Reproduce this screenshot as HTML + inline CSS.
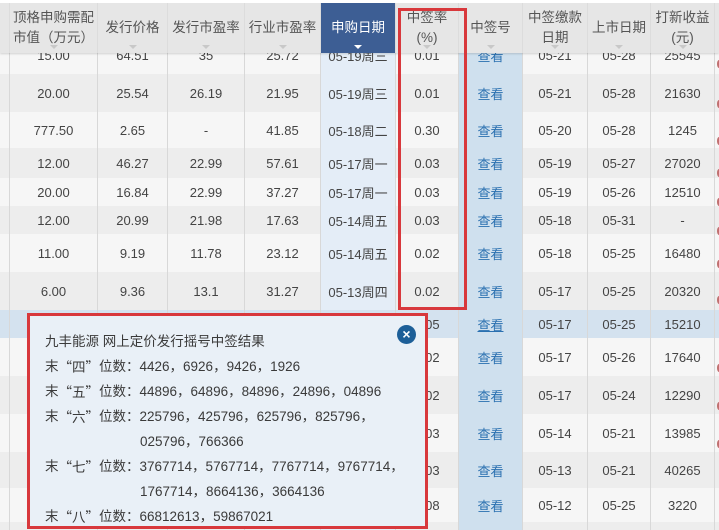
<!DOCTYPE html>
<html><head><meta charset="utf-8"><style>
*{margin:0;padding:0;box-sizing:border-box}
html,body{width:719px;height:530px;overflow:hidden}
body{background:#f4f4f4;font-family:"Liberation Sans","Noto Sans CJK SC",sans-serif;font-size:13px;color:#444;position:relative}
.row{position:absolute;left:0;width:719px;display:flex}
.row div{height:100%;display:flex;align-items:center;justify-content:center;border-right:1px solid #d8d8d8;white-space:nowrap}
.c0{width:10px}.c1{width:88px}.c2{width:70px}.c3{width:77px}.c4{width:76px}.c5{width:75px;background:#e4edf7}.c6{width:63px}.c7{width:64px;background:#cfe0ee;color:#2a70b0}.c8{width:65px}.c9{width:63px}.c10{width:64px}.c11{width:4px;border:none!important}
.a{background:#f6f6f6}.b{background:#ededed}
.hl{background:#d4e2ef}
.hdr{position:absolute;left:0;top:0;width:719px;height:53px;background:#e6e6e6;border-top:3px solid #fff;display:flex;z-index:2;box-shadow:0 1px 2px rgba(0,0,0,.15)}
.hdr div{height:100%;display:flex;flex-direction:column;align-items:center;justify-content:center;text-align:center;color:#555;font-size:13.5px;line-height:20px;position:relative;border-right:1px solid #dcdcdc}
.hdr div::after{content:"";position:absolute;bottom:4px;left:50%;margin-left:-4px;border:4px solid transparent;border-top:4px solid #c8c8c8;border-bottom:none}
.hdr .c0::after,.hdr .c11::after{display:none}
.hdr .act{background:#3d5e94;color:#fff}
.hdr .act::after{border-top-color:#fff}
.hdr .c5,.hdr .c7{background:#e6e6e6;color:#555}
.hdr .c5.act{background:#3d5e94;color:#fff}
.red{position:absolute;left:398px;top:8px;width:69px;height:302px;border:3px solid #d8383c;z-index:3}
.pop{position:absolute;left:27px;top:313px;width:401px;height:216px;border:3px solid #d8383c;background:#e9f0f7;z-index:4;padding:13px 0 0 15px;color:#3a3a3a;font-size:13.5px;line-height:25px}
.pop p{white-space:nowrap;height:25px;overflow:visible}
.pop .in{padding-left:95px}
.q{font-family:"Noto Sans CJK SC",sans-serif;line-height:1;display:inline-block;height:14px;vertical-align:-1px}
.x{position:absolute;left:367px;top:9px;width:19px;height:19px;border-radius:50%;background:#1d5f98;color:#fff;font-size:14px;line-height:18px;text-align:center;font-weight:bold}
.dot{position:absolute;left:717px;width:4px;height:8px;border-radius:50%;background:#c07070;z-index:1}
</style></head><body>

<div class="hdr">
<div class="c0"></div>
<div class="c1" style="align-items:flex-start;padding-left:3px">顶格申购需配<br>市值（万元）</div>
<div class="c2">发行价格</div>
<div class="c3">发行市盈率</div>
<div class="c4">行业市盈率</div>
<div class="c5 act">申购日期</div>
<div class="c6">中签率<br>(%)</div>
<div class="c7">中签号</div>
<div class="c8">中签缴款<br>日期</div>
<div class="c9">上市日期</div>
<div class="c10">打新收益<br>(元)</div>
<div class="c11" style="border:none"></div>
</div>

<div class="row a" style="top:36px;height:38px"><div class="c0"></div><div class="c1">15.00</div><div class="c2">64.51</div><div class="c3">35</div><div class="c4">25.72</div><div class="c5">05-19周三</div><div class="c6">0.01</div><div class="c7">查看</div><div class="c8">05-21</div><div class="c9">05-28</div><div class="c10">25545</div><div class="c11"></div></div>
<div class="row b" style="top:74px;height:38px"><div class="c0"></div><div class="c1">20.00</div><div class="c2">25.54</div><div class="c3">26.19</div><div class="c4">21.95</div><div class="c5">05-19周三</div><div class="c6">0.01</div><div class="c7">查看</div><div class="c8">05-21</div><div class="c9">05-28</div><div class="c10">21630</div><div class="c11"></div></div>
<div class="row a" style="top:112px;height:36px"><div class="c0"></div><div class="c1">777.50</div><div class="c2">2.65</div><div class="c3">-</div><div class="c4">41.85</div><div class="c5">05-18周二</div><div class="c6">0.30</div><div class="c7">查看</div><div class="c8">05-20</div><div class="c9">05-28</div><div class="c10">1245</div><div class="c11"></div></div>
<div class="row b" style="top:148px;height:30px"><div class="c0"></div><div class="c1">12.00</div><div class="c2">46.27</div><div class="c3">22.99</div><div class="c4">57.61</div><div class="c5">05-17周一</div><div class="c6">0.03</div><div class="c7">查看</div><div class="c8">05-19</div><div class="c9">05-27</div><div class="c10">27020</div><div class="c11"></div></div>
<div class="row a" style="top:178px;height:28px"><div class="c0"></div><div class="c1">20.00</div><div class="c2">16.84</div><div class="c3">22.99</div><div class="c4">37.27</div><div class="c5">05-17周一</div><div class="c6">0.03</div><div class="c7">查看</div><div class="c8">05-19</div><div class="c9">05-26</div><div class="c10">12510</div><div class="c11"></div></div>
<div class="row b" style="top:206px;height:28px"><div class="c0"></div><div class="c1">12.00</div><div class="c2">20.99</div><div class="c3">21.98</div><div class="c4">17.63</div><div class="c5">05-14周五</div><div class="c6">0.03</div><div class="c7">查看</div><div class="c8">05-18</div><div class="c9">05-31</div><div class="c10">-</div><div class="c11"></div></div>
<div class="row a" style="top:234px;height:38px"><div class="c0"></div><div class="c1">11.00</div><div class="c2">9.19</div><div class="c3">11.78</div><div class="c4">23.12</div><div class="c5">05-14周五</div><div class="c6">0.02</div><div class="c7">查看</div><div class="c8">05-18</div><div class="c9">05-25</div><div class="c10">16480</div><div class="c11"></div></div>
<div class="row b" style="top:272px;height:38px"><div class="c0"></div><div class="c1">6.00</div><div class="c2">9.36</div><div class="c3">13.1</div><div class="c4">31.27</div><div class="c5">05-13周四</div><div class="c6">0.02</div><div class="c7">查看</div><div class="c8">05-17</div><div class="c9">05-25</div><div class="c10">20320</div><div class="c11"></div></div>
<div class="row hl" style="top:310px;height:28px"><div class="c0"></div><div class="c1"></div><div class="c2"></div><div class="c3"></div><div class="c4"></div><div class="c5" style="background:#d4e2ef"></div><div class="c6">0.05</div><div class="c7" style="text-decoration:underline">查看</div><div class="c8">05-17</div><div class="c9">05-25</div><div class="c10">15210</div><div class="c11"></div></div>
<div class="row a" style="top:338px;height:38px"><div class="c0"></div><div class="c1"></div><div class="c2"></div><div class="c3"></div><div class="c4"></div><div class="c5"></div><div class="c6">0.02</div><div class="c7">查看</div><div class="c8">05-17</div><div class="c9">05-26</div><div class="c10">17640</div><div class="c11"></div></div>
<div class="row b" style="top:376px;height:38px"><div class="c0"></div><div class="c1"></div><div class="c2"></div><div class="c3"></div><div class="c4"></div><div class="c5"></div><div class="c6">0.02</div><div class="c7">查看</div><div class="c8">05-17</div><div class="c9">05-24</div><div class="c10">12290</div><div class="c11"></div></div>
<div class="row a" style="top:414px;height:38px"><div class="c0"></div><div class="c1"></div><div class="c2"></div><div class="c3"></div><div class="c4"></div><div class="c5"></div><div class="c6">0.03</div><div class="c7">查看</div><div class="c8">05-14</div><div class="c9">05-21</div><div class="c10">13985</div><div class="c11"></div></div>
<div class="row b" style="top:452px;height:36px"><div class="c0"></div><div class="c1"></div><div class="c2"></div><div class="c3"></div><div class="c4"></div><div class="c5"></div><div class="c6">0.03</div><div class="c7">查看</div><div class="c8">05-13</div><div class="c9">05-21</div><div class="c10">40265</div><div class="c11"></div></div>
<div class="row a" style="top:488px;height:34px"><div class="c0"></div><div class="c1"></div><div class="c2"></div><div class="c3"></div><div class="c4"></div><div class="c5"></div><div class="c6">0.08</div><div class="c7">查看</div><div class="c8">05-12</div><div class="c9">05-25</div><div class="c10">3220</div><div class="c11"></div></div>
<div class="row b" style="top:522px;height:8px"><div class="c0"></div><div class="c1"></div><div class="c2"></div><div class="c3"></div><div class="c4"></div><div class="c5"></div><div class="c6"></div><div class="c7"></div><div class="c8"></div><div class="c9"></div><div class="c10"></div><div class="c11"></div></div>

<div class="dot" style="top:60px"></div><div class="dot" style="top:100px"></div><div class="dot" style="top:137px"></div><div class="dot" style="top:169px"></div><div class="dot" style="top:198px"></div><div class="dot" style="top:227px"></div><div class="dot" style="top:260px"></div><div class="dot" style="top:296px"></div><div class="dot" style="top:364px"></div><div class="dot" style="top:402px"></div><div class="dot" style="top:440px"></div>

<div class="red"></div>
<div class="pop">
<div class="x">×</div>
<p>九丰能源 网上定价发行摇号中签结果</p>
<p>末<span class="q">“四”</span>位数：4426，6926，9426，1926</p>
<p>末<span class="q">“五”</span>位数：44896，64896，84896，24896，04896</p>
<p>末<span class="q">“六”</span>位数：225796，425796，625796，825796，</p>
<p class="in">025796，766366</p>
<p>末<span class="q">“七”</span>位数：3767714，5767714，7767714，9767714，</p>
<p class="in">1767714，8664136，3664136</p>
<p>末<span class="q">“八”</span>位数：66812613，59867021</p>
</div>
</body></html>
